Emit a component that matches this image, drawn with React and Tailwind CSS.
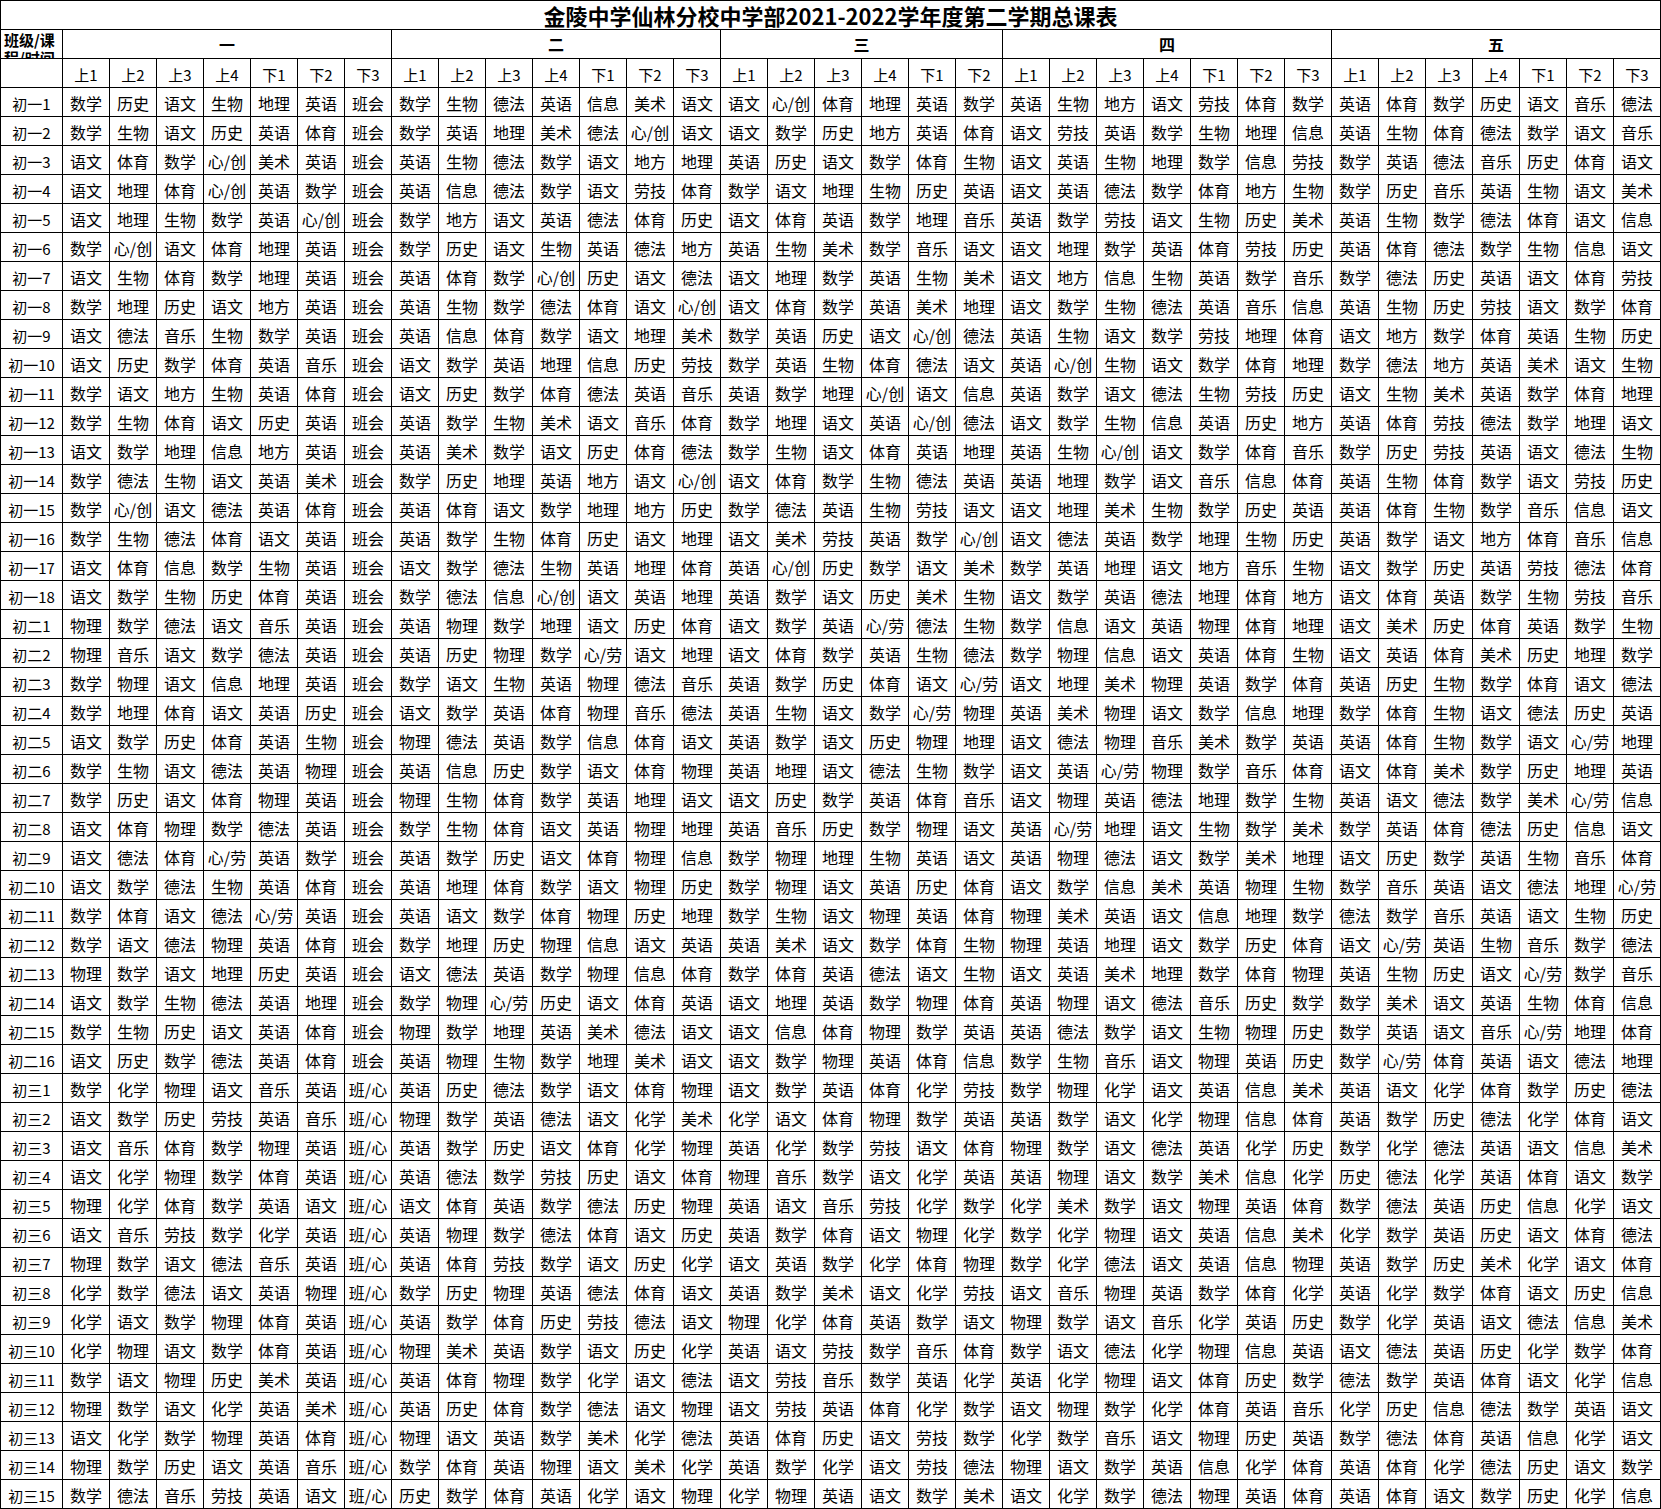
import React from "react";

const RAW = `初一1 数学 历史 语文 生物 地理 英语 班会 数学 生物 德法 英语 信息 美术 语文 语文 心/创 体育 地理 英语 数学 英语 生物 地方 语文 劳技 体育 数学 英语 体育 数学 历史 语文 音乐 德法
初一2 数学 生物 语文 历史 英语 体育 班会 数学 英语 地理 美术 德法 心/创 语文 语文 数学 历史 地方 英语 体育 语文 劳技 英语 数学 生物 地理 信息 英语 生物 体育 德法 数学 语文 音乐
初一3 语文 体育 数学 心/创 美术 英语 班会 英语 生物 德法 数学 语文 地方 地理 英语 历史 语文 数学 体育 生物 语文 英语 生物 地理 数学 信息 劳技 数学 英语 德法 音乐 历史 体育 语文
初一4 语文 地理 体育 心/创 英语 数学 班会 英语 信息 德法 数学 语文 劳技 体育 数学 语文 地理 生物 历史 英语 语文 英语 德法 数学 体育 地方 生物 数学 历史 音乐 英语 生物 语文 美术
初一5 语文 地理 生物 数学 英语 心/创 班会 数学 地方 语文 英语 德法 体育 历史 语文 体育 英语 数学 地理 音乐 英语 数学 劳技 语文 生物 历史 美术 英语 生物 数学 德法 体育 语文 信息
初一6 数学 心/创 语文 体育 地理 英语 班会 数学 历史 语文 生物 英语 德法 地方 英语 生物 美术 数学 音乐 语文 语文 地理 数学 英语 体育 劳技 历史 英语 体育 德法 数学 生物 信息 语文
初一7 语文 生物 体育 数学 地理 英语 班会 英语 体育 数学 心/创 历史 语文 德法 语文 地理 数学 英语 生物 美术 语文 地方 信息 生物 英语 数学 音乐 数学 德法 历史 英语 语文 体育 劳技
初一8 数学 地理 历史 语文 地方 英语 班会 英语 生物 数学 德法 体育 语文 心/创 语文 体育 数学 英语 美术 地理 语文 数学 生物 德法 英语 音乐 信息 英语 生物 历史 劳技 语文 数学 体育
初一9 语文 德法 音乐 生物 数学 英语 班会 英语 信息 体育 数学 语文 地理 美术 数学 英语 历史 语文 心/创 德法 英语 生物 语文 数学 劳技 地理 体育 语文 地方 数学 体育 英语 生物 历史
初一10 语文 历史 数学 体育 英语 音乐 班会 语文 数学 英语 地理 信息 历史 劳技 数学 英语 生物 体育 德法 语文 英语 心/创 生物 语文 数学 体育 地理 数学 德法 地方 英语 美术 语文 生物
初一11 数学 语文 地方 生物 英语 体育 班会 语文 历史 数学 体育 德法 英语 音乐 英语 数学 地理 心/创 语文 信息 英语 数学 语文 德法 生物 劳技 历史 语文 生物 美术 英语 数学 体育 地理
初一12 数学 生物 体育 语文 历史 英语 班会 英语 数学 生物 美术 语文 音乐 体育 数学 地理 语文 英语 心/创 德法 语文 数学 生物 信息 英语 历史 地方 英语 体育 劳技 德法 数学 地理 语文
初一13 语文 数学 地理 信息 地方 英语 班会 英语 美术 数学 语文 历史 体育 德法 数学 生物 语文 体育 英语 地理 英语 生物 心/创 语文 数学 体育 音乐 数学 历史 劳技 英语 语文 德法 生物
初一14 数学 德法 生物 语文 英语 美术 班会 数学 历史 地理 英语 地方 语文 心/创 语文 体育 数学 生物 德法 英语 英语 地理 数学 语文 音乐 信息 体育 英语 生物 体育 数学 语文 劳技 历史
初一15 数学 心/创 语文 德法 英语 体育 班会 英语 体育 语文 数学 地理 地方 历史 数学 德法 英语 生物 劳技 语文 语文 地理 美术 生物 数学 历史 英语 英语 体育 生物 数学 音乐 信息 语文
初一16 数学 生物 德法 体育 语文 英语 班会 英语 数学 生物 体育 历史 语文 地理 语文 美术 劳技 英语 数学 心/创 语文 德法 英语 数学 地理 生物 历史 英语 数学 语文 地方 体育 音乐 信息
初一17 语文 体育 信息 数学 生物 英语 班会 语文 数学 德法 生物 英语 地理 体育 英语 心/创 历史 数学 语文 美术 数学 英语 地理 语文 地方 音乐 生物 语文 数学 历史 英语 劳技 德法 体育
初一18 语文 数学 生物 历史 体育 英语 班会 数学 德法 信息 心/创 语文 英语 地理 英语 数学 语文 历史 美术 生物 语文 数学 英语 德法 地理 体育 地方 语文 体育 英语 数学 生物 劳技 音乐
初二1 物理 数学 德法 语文 音乐 英语 班会 英语 物理 数学 地理 语文 历史 体育 语文 数学 英语 心/劳 德法 生物 数学 信息 语文 英语 物理 体育 地理 语文 美术 历史 体育 英语 数学 生物
初二2 物理 音乐 语文 数学 德法 英语 班会 英语 历史 物理 数学 心/劳 语文 地理 语文 体育 数学 英语 生物 德法 数学 物理 信息 语文 英语 体育 生物 语文 英语 体育 美术 历史 地理 数学
初二3 数学 物理 语文 信息 地理 英语 班会 数学 语文 生物 英语 物理 德法 音乐 英语 数学 历史 体育 语文 心/劳 语文 地理 美术 物理 英语 数学 体育 英语 历史 生物 数学 体育 语文 德法
初二4 数学 地理 体育 语文 英语 历史 班会 语文 数学 英语 体育 物理 音乐 德法 英语 生物 语文 数学 心/劳 物理 英语 美术 物理 语文 数学 信息 地理 数学 体育 生物 语文 德法 历史 英语
初二5 语文 数学 历史 体育 英语 生物 班会 物理 德法 英语 数学 信息 体育 语文 英语 数学 语文 历史 物理 地理 语文 德法 物理 音乐 美术 数学 英语 英语 体育 生物 数学 语文 心/劳 地理
初二6 数学 生物 语文 德法 英语 物理 班会 英语 信息 历史 数学 语文 体育 物理 英语 地理 语文 德法 生物 数学 语文 英语 心/劳 物理 数学 音乐 体育 语文 体育 美术 数学 历史 地理 英语
初二7 数学 历史 语文 体育 物理 英语 班会 物理 生物 体育 数学 英语 地理 语文 语文 历史 数学 英语 体育 音乐 语文 物理 英语 德法 地理 数学 生物 英语 语文 德法 数学 美术 心/劳 信息
初二8 语文 体育 物理 数学 德法 英语 班会 数学 生物 体育 语文 英语 物理 地理 英语 音乐 历史 数学 物理 语文 英语 心/劳 地理 语文 生物 数学 美术 数学 英语 体育 德法 历史 信息 语文
初二9 语文 德法 体育 心/劳 英语 数学 班会 英语 数学 历史 语文 体育 物理 信息 数学 物理 地理 生物 英语 语文 英语 物理 德法 语文 数学 美术 地理 语文 历史 数学 英语 生物 音乐 体育
初二10 语文 数学 德法 生物 英语 体育 班会 英语 地理 体育 数学 语文 物理 历史 数学 物理 语文 英语 历史 体育 语文 数学 信息 美术 英语 物理 生物 数学 音乐 英语 语文 德法 地理 心/劳
初二11 数学 体育 语文 德法 心/劳 英语 班会 英语 语文 数学 体育 物理 历史 地理 数学 生物 语文 物理 英语 体育 物理 美术 英语 语文 信息 地理 数学 德法 数学 音乐 英语 语文 生物 历史
初二12 数学 语文 德法 物理 英语 体育 班会 数学 地理 历史 物理 信息 语文 英语 英语 美术 语文 数学 体育 生物 物理 英语 地理 语文 数学 历史 体育 语文 心/劳 英语 生物 音乐 数学 德法
初二13 物理 数学 语文 地理 历史 英语 班会 语文 德法 英语 数学 物理 信息 体育 数学 体育 英语 德法 语文 生物 语文 英语 美术 地理 数学 体育 物理 英语 生物 历史 语文 心/劳 数学 音乐
初二14 语文 数学 生物 德法 英语 地理 班会 数学 物理 心/劳 历史 语文 体育 英语 语文 地理 英语 数学 物理 体育 英语 物理 语文 德法 音乐 历史 数学 数学 美术 语文 英语 生物 体育 信息
初二15 数学 生物 历史 语文 英语 体育 班会 物理 数学 地理 英语 美术 德法 语文 语文 信息 体育 物理 数学 英语 英语 德法 数学 语文 生物 物理 历史 数学 英语 语文 音乐 心/劳 地理 体育
初二16 语文 历史 数学 德法 英语 体育 班会 英语 物理 生物 数学 地理 美术 语文 语文 数学 物理 英语 体育 信息 数学 生物 音乐 语文 物理 英语 历史 数学 心/劳 体育 英语 语文 德法 地理
初三1 数学 化学 物理 语文 音乐 英语 班/心 英语 历史 德法 数学 语文 体育 物理 语文 数学 英语 体育 化学 劳技 数学 物理 化学 语文 英语 信息 美术 英语 语文 化学 体育 数学 历史 德法
初三2 语文 数学 历史 劳技 英语 音乐 班/心 物理 数学 英语 德法 语文 化学 美术 化学 语文 体育 物理 数学 英语 英语 数学 语文 化学 物理 信息 体育 英语 数学 历史 德法 化学 体育 语文
初三3 语文 音乐 体育 数学 物理 英语 班/心 英语 数学 历史 语文 体育 化学 物理 英语 化学 数学 劳技 语文 体育 物理 数学 语文 德法 英语 化学 历史 数学 化学 德法 英语 语文 信息 美术
初三4 语文 化学 物理 数学 体育 英语 班/心 英语 德法 数学 劳技 历史 语文 体育 物理 音乐 数学 语文 化学 英语 英语 物理 语文 数学 美术 信息 化学 历史 德法 化学 英语 体育 语文 数学
初三5 物理 化学 体育 数学 英语 语文 班/心 语文 体育 英语 数学 德法 历史 物理 英语 语文 音乐 劳技 化学 数学 化学 美术 数学 语文 物理 英语 体育 数学 德法 英语 历史 信息 化学 语文
初三6 语文 音乐 劳技 数学 化学 英语 班/心 英语 物理 数学 德法 体育 语文 历史 英语 数学 体育 语文 物理 化学 数学 化学 物理 语文 英语 信息 美术 化学 数学 英语 历史 语文 体育 德法
初三7 物理 数学 语文 德法 音乐 英语 班/心 英语 体育 劳技 数学 语文 历史 化学 语文 英语 数学 化学 体育 物理 数学 化学 德法 语文 英语 信息 物理 英语 数学 历史 美术 化学 语文 体育
初三8 化学 数学 德法 语文 英语 物理 班/心 数学 历史 物理 英语 德法 体育 语文 英语 数学 美术 语文 化学 劳技 语文 音乐 物理 英语 数学 体育 化学 英语 化学 数学 体育 语文 历史 信息
初三9 化学 语文 数学 物理 体育 英语 班/心 英语 数学 体育 历史 劳技 德法 语文 物理 化学 体育 英语 数学 语文 物理 数学 语文 音乐 化学 英语 历史 数学 化学 英语 语文 德法 信息 美术
初三10 化学 物理 语文 数学 体育 英语 班/心 物理 美术 英语 数学 语文 历史 化学 英语 语文 劳技 数学 音乐 体育 数学 语文 德法 化学 物理 信息 英语 语文 德法 英语 历史 化学 数学 体育
初三11 数学 语文 物理 历史 美术 英语 班/心 英语 体育 物理 数学 化学 语文 德法 语文 劳技 音乐 数学 英语 化学 英语 化学 物理 语文 体育 历史 数学 德法 数学 英语 体育 语文 化学 信息
初三12 物理 数学 语文 化学 英语 美术 班/心 英语 历史 体育 数学 德法 语文 物理 语文 劳技 英语 体育 化学 数学 语文 物理 数学 化学 体育 英语 音乐 化学 历史 信息 德法 数学 英语 语文
初三13 语文 化学 数学 物理 英语 体育 班/心 物理 语文 英语 数学 美术 化学 德法 英语 体育 历史 语文 劳技 数学 化学 数学 音乐 语文 物理 历史 英语 数学 德法 体育 英语 信息 化学 语文
初三14 物理 数学 历史 语文 英语 音乐 班/心 数学 体育 英语 物理 语文 美术 化学 英语 数学 化学 语文 劳技 德法 物理 语文 数学 英语 信息 化学 体育 英语 体育 化学 德法 历史 语文 数学
初三15 数学 德法 音乐 劳技 英语 语文 班/心 历史 数学 体育 英语 化学 语文 物理 化学 物理 英语 语文 数学 美术 语文 化学 数学 德法 物理 英语 体育 英语 体育 语文 数学 历史 化学 信息`;

const ROWS = RAW.trim()
  .split("\n")
  .map((l) => l.trim().split(/\s+/));

const PERIODS7 = ["上1", "上2", "上3", "上4", "下1", "下2", "下3"];
const PERIODS6 = ["上1", "上2", "上3", "上4", "下1", "下2"];
const DAYS = [
  { label: "一", periods: PERIODS7, span: "col-span-7" },
  { label: "二", periods: PERIODS7, span: "col-span-7" },
  { label: "三", periods: PERIODS6, span: "col-span-6" },
  { label: "四", periods: PERIODS7, span: "col-span-7" },
  { label: "五", periods: PERIODS7, span: "col-span-7" },
];

const cell =
  "bg-white flex items-center justify-center whitespace-nowrap overflow-hidden text-black";

export default function App() {
  return (
    <div className="w-[1661px] bg-white font-['Noto_Sans_CJK_SC',sans-serif]">
      <div className="grid grid-cols-[61px_repeat(34,46px)] auto-rows-[28px] gap-px bg-black p-px">
        <div className="bg-white col-span-full flex items-center justify-center whitespace-nowrap text-black text-[22px] font-bold leading-[26px]">
          金陵中学仙林分校中学部2021-2022学年度第二学期总课表
        </div>

        <div className="bg-white overflow-hidden text-black text-[15px] font-bold leading-[18px] pl-[3px] pt-[1px] break-all">
          班级/课程/时间
        </div>
        {DAYS.map((d) => (
          <div
            key={d.label}
            className={`${cell} ${d.span} text-[16px] font-bold leading-none`}
          >
            {d.label}
          </div>
        ))}

        <div className="bg-white" />
        {DAYS.map((d) =>
          d.periods.map((p) => (
            <div
              key={d.label + p}
              className={`${cell} text-[15px] leading-none pt-[2px]`}
            >
              {p}
            </div>
          ))
        )}

        {ROWS.map((r) => (
          <React.Fragment key={r[0]}>
            <div className={`${cell} text-[15px] leading-none pt-[2px]`}>
              {r[0]}
            </div>
            {r.slice(1).map((s, i) => (
              <div
                key={i}
                className={`${cell} text-[16px] leading-none pt-[2px]`}
              >
                {s}
              </div>
            ))}
          </React.Fragment>
        ))}
      </div>
    </div>
  );
}
